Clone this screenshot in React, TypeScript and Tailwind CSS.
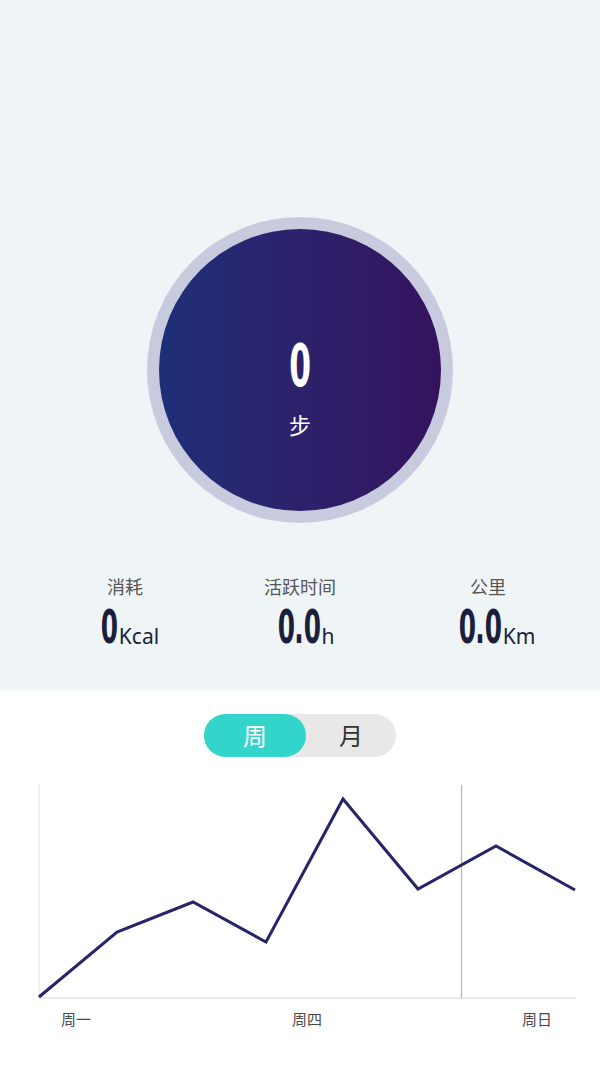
const points: [number, number][] = [
  [39, 997],
  [117, 932],
  [193, 902],
  [266, 942],
  [343, 799],
  [418, 889],
  [496, 846],
  [575, 890],
]

const TOP = 775

const numFont = { fontFamily: '"DejaVu Sans Condensed", "DejaVu Sans", sans-serif' }

// condensed digits: each glyph squeezed inside a fixed-width box
function Digits({ text }: { text: string }) {
  return (
    <span className="flex text-[46px] leading-[40px] font-bold" style={numFont}>
      {text.split('').map((c, i) => (
        <span key={i} className={`flex justify-center ${c === '.' ? 'w-[9px]' : 'w-[17px]'}`}>
          <span className="inline-block scale-x-[0.6]">{c}</span>
        </span>
      ))}
    </span>
  )
}

function Stat({
  label,
  value,
  unit,
  className,
  shift,
}: {
  label: string
  value: string
  unit: string
  className: string
  shift: string
}) {
  return (
    <div className={`flex flex-col items-center ${className}`}>
      <div className="text-[18px] leading-6 text-[#555]">{label}</div>
      <div className={`mt-[8px] flex items-end text-[#1b1f3b] ${shift}`}>
        <Digits text={value} />
        <span className="ml-[1px] text-[21px] leading-[24px] -mb-[1px]">{unit}</span>
      </div>
    </div>
  )
}

export default function App() {
  const line = points.map(([x, y]) => `${x},${y - TOP}`).join(' ')
  return (
    <div
      className="w-[600px] h-[1067px] bg-white overflow-hidden"
      style={{ fontFamily: '"Noto Sans", "Noto Sans CJK SC", sans-serif' }}
    >
      <div className="h-[690px] bg-[#eff4f7] pt-[217px] flex flex-col items-center">
        <div className="w-[306px] h-[306px] rounded-full bg-[#c8cbde] flex items-center justify-center">
          <div className="w-[282px] h-[282px] rounded-full bg-gradient-to-r from-[#1d2f78] to-[#34125e] flex flex-col items-center justify-center">
            <span
              className="inline-block mt-[40px] text-[58px] leading-[50px] font-bold text-white scale-x-[0.6]"
              style={numFont}
            >
              0
            </span>
            <span className="mt-[20px] text-[22px] leading-7 text-white">步</span>
          </div>
        </div>
        <div className="mt-[52px] w-full flex pl-[37px]">
          <Stat label="消耗" value="0" unit="Kcal" className="w-[176px]" shift="pl-[10px]" />
          <Stat label="活跃时间" value="0.0" unit="h" className="w-[174px]" shift="pl-[12px]" />
          <Stat label="公里" value="0.0" unit="Km" className="w-[202px]" shift="pl-[18px]" />
        </div>
      </div>
      <div className="flex flex-col items-center">
        <div className="mt-[24px] w-[192px] h-[43px] rounded-full bg-[#e8e8e8] flex">
          <div className="w-[102px] h-full rounded-full bg-[#33d4ca] flex items-center justify-center text-white text-[24px]">
            周
          </div>
          <div className="flex-1 flex items-center justify-center text-[#333] text-[24px]">月</div>
        </div>
        <svg width="600" height="270" className="mt-[18px] block">
          <line x1="39" y1="10" x2="39" y2={998 - TOP} stroke="#e2e2e2" strokeWidth="1" />
          <line x1="39" y1={998 - TOP} x2="576" y2={998 - TOP} stroke="#e2e2e2" strokeWidth="1.5" />
          <line x1="461.5" y1="10" x2="461.5" y2={998 - TOP} stroke="#b5b5b5" strokeWidth="1.2" />
          <polyline points={line} fill="none" stroke="#272568" strokeWidth="3" strokeLinejoin="miter" />
          <text x="76" y={1025 - TOP} textAnchor="middle" fontSize="15" fill="#4a4a4a">周一</text>
          <text x="307" y={1025 - TOP} textAnchor="middle" fontSize="15" fill="#4a4a4a">周四</text>
          <text x="537" y={1025 - TOP} textAnchor="middle" fontSize="15" fill="#4a4a4a">周日</text>
        </svg>
      </div>
    </div>
  )
}
